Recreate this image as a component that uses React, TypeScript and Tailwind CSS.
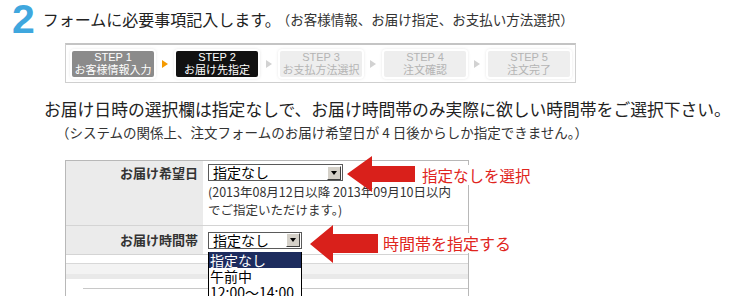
import type { ReactNode } from "react";

type Step = { no: number; label: string; state: "done" | "current" | "todo" };

const steps: Step[] = [
  { no: 1, label: "お客様情報入力", state: "done" },
  { no: 2, label: "お届け先指定", state: "current" },
  { no: 3, label: "お支払方法選択", state: "todo" },
  { no: 4, label: "注文確認", state: "todo" },
  { no: 5, label: "注文完了", state: "todo" },
];

function StepBox({ step }: { step: Step }) {
  const tone =
    step.state === "done"
      ? "bg-[#8b8b8b] text-white"
      : step.state === "current"
        ? "bg-[#111111] text-white"
        : "bg-[#eeeeee] text-[#b4b4b4]";
  return (
    <div
      className={`flex h-[26px] w-[82px] shrink-0 flex-col items-center justify-center rounded-[2px] text-[11px] leading-[12px] shadow-[0_0_0_2px_#ffffff,0_0_3px_2px_rgba(0,0,0,0.1)] ${tone}`}
    >
      <span className="font-[family-name:'Liberation_Sans',sans-serif] leading-[11px]">STEP {step.no}</span>
      <span className="leading-[12px]">{step.label}</span>
    </div>
  );
}

function StepArrow({ active }: { active: boolean }) {
  return (
    <span
      className={`h-0 w-0 shrink-0 border-y-[4px] border-l-[6px] border-y-transparent ${
        active ? "border-l-[#f59a00]" : "border-l-[#d2d2d2]"
      }`}
    />
  );
}

function FakeSelect({ className, value }: { className: string; value: string }) {
  return (
    <div className={`flex h-[17px] items-center border border-[#5a5a5a] bg-white ${className}`}>
      <span className="flex-1 pl-[4px] text-[14px] leading-[15px] text-black">{value}</span>
      <span className="mr-[1px] flex h-[14px] w-[14px] items-center justify-center border border-t-white border-l-white border-r-[#404040] border-b-[#404040] bg-[#d4d0c8]">
        <span className="h-0 w-0 border-x-[3.5px] border-t-[4px] border-x-transparent border-t-black" />
      </span>
    </div>
  );
}

function Note({ children, className }: { children: ReactNode; className: string }) {
  return (
    <span className={`absolute bg-white whitespace-nowrap text-[#e0251d] ${className}`}>{children}</span>
  );
}

export default function App() {
  return (
    <div className="relative h-[296px] w-[750px] overflow-hidden bg-white font-[family-name:'Noto_Sans_CJK_JP','Liberation_Sans',sans-serif] text-[#333333]">
      {/* heading */}
      <div className="flex h-[38px] items-center pl-[12px]">
        <span className="font-[family-name:'Liberation_Sans',sans-serif] text-[41px] leading-[38px] font-bold text-[#3fa7de]">
          2
        </span>
        <span className="ml-[8px] text-[16px] leading-[20px] text-[#222222]">フォームに必要事項記入します。</span>
        <span className="-ml-[4px] text-[13.5px] leading-[20px]">（お客様情報、お届け指定、お支払い方法選択）</span>
      </div>

      {/* steps */}
      <div className="ml-[65px] mt-[5px] flex h-[40px] w-[511px] items-center gap-[8px] border border-t-2 border-[#cfcfcf] border-t-[#c4c4c4] pl-[6px]">
        {steps.map((step, i) => (
          <div key={step.no} className="flex items-center gap-[8px]">
            {i > 0 && <StepArrow active={i === 1} />}
            <StepBox step={step} />
          </div>
        ))}
      </div>

      {/* notice */}
      <p className="ml-[44px] mt-[16px] text-[16.8px] leading-[20px] whitespace-nowrap text-[#222222]">
        お届け日時の選択欄は指定なしで、お届け時間帯のみ実際に欲しい時間帯をご選択下さい。
      </p>
      <p className="ml-[56px] mt-[4px] text-[13.5px] leading-[18px] whitespace-nowrap">
        （システムの関係上、注文フォームのお届け希望日が 4 日後からしか指定できません。）
      </p>

      {/* form table */}
      <div className="ml-[65px] mt-[19px] h-[160px] w-[404px] border border-[#b8b8b8]">
        <div className="grid h-[65px] grid-cols-[137px_1fr] border-b border-[#d4d4d4]">
          <div className="bg-[#ebebeb] pr-[5px] pt-[3px] text-right text-[13px] leading-[17px] font-bold">
            お届け希望日
          </div>
          <div className="pl-[5px] pt-[3px]">
            <FakeSelect className="w-[135px]" value="指定なし" />
            <p className="mt-[2px] text-[12.5px] leading-[18px] whitespace-nowrap">
              (2013年08月12日以降 2013年09月10日以内
              <br />
              でご指定いただけます。)
            </p>
          </div>
        </div>
        <div className="grid h-[29px] grid-cols-[137px_1fr] border-b border-[#d4d4d4]">
          <div className="flex items-center justify-end bg-[#ebebeb] pr-[5px] text-[13px] font-bold">
            お届け時間帯
          </div>
          <div className="flex items-center pl-[5px]">
            <FakeSelect className="w-[94px]" value="指定なし" />
          </div>
        </div>
        <div className="h-[9px] border-b border-[#d8d8d8]" />
        <div className="h-[10px] bg-[#f3f3f3]" />
        <div className="h-[5px] bg-[#e9e9e9]" />
        <div className="h-[9px]" />
        <div className="ml-[17px] h-px bg-[#c8c8c8]" />
      </div>

      {/* open dropdown list */}
      <ul className="absolute left-[208px] top-[252px] w-[94px] border-x border-black bg-white text-[14px] leading-[16px] text-black">
        <li className="bg-[#1d2c5e] pl-[1px] text-white">指定なし</li>
        <li className="pl-[1px]">午前中</li>
        <li className="pl-[1px]">12:00〜14:00</li>
      </ul>

      {/* annotations */}
      <svg className="absolute left-[347px] top-[155px]" width="70" height="38" viewBox="0 0 70 38">
        <polygon points="0,19 25,1 25,11 68,11 68,27 25,27 25,37" fill="#d9201b" />
      </svg>
      <Note className="left-[422px] top-[165px] text-[15.5px] leading-[20px]">指定なしを選択</Note>

      <svg className="absolute left-[310px] top-[224px]" width="70" height="40" viewBox="0 0 70 40">
        <polygon points="0,20 23,1 23,10 68,10 68,29 23,29 23,39" fill="#d9201b" />
      </svg>
      <Note className="left-[383px] top-[233px] text-[16px] leading-[20px]">時間帯を指定する</Note>
    </div>
  );
}
